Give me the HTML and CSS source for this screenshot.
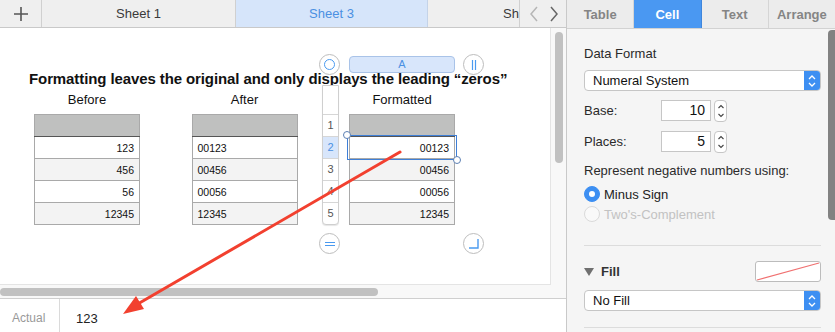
FILE: index.html
```html
<!DOCTYPE html>
<html>
<head>
  <meta charset="utf-8" />
  <title>Numbers - Numeral System</title>
  <link rel="stylesheet" href="styles.css">
</head>
<body>
  <div class="main">
    <!-- sheet tabs -->
    <div class="tabbar">
      <div class="tab-add">
        <svg width="16" height="16" viewBox="0 0 16 16"><path d="M8 1v14M1 8h14" stroke="#555" stroke-width="1.6" fill="none"/></svg>
      </div>
      <div class="sheet-tab">Sheet 1</div>
      <div class="sheet-tab active">Sheet 3</div>
      <div class="sheet-tab clipped"><span>Sh</span></div>
      <div class="tab-nav">
        <svg width="12" height="18" viewBox="0 0 12 18"><path d="M9 2L3 9l6 7" stroke="#b5b5b5" stroke-width="1.5" fill="none"/></svg>
        <svg width="12" height="18" viewBox="0 0 12 18"><path d="M3 2l6 7-6 7" stroke="#666" stroke-width="1.5" fill="none"/></svg>
      </div>
    </div>

    <!-- canvas -->
    <div class="canvas">
      <div class="sheet">
        <div class="title">Formatting leaves the original and only displays the leading “zeros”</div>
        <div class="groups">
          <div class="group">
            <div class="caption">Before</div>
            <table class="tbl right">
              <tr class="head"><td></td></tr>
              <tr><td>123</td></tr>
              <tr class="alt"><td>456</td></tr>
              <tr><td>56</td></tr>
              <tr class="alt"><td>12345</td></tr>
            </table>
          </div>
          <div class="group">
            <div class="caption">After</div>
            <table class="tbl">
              <tr class="head"><td></td></tr>
              <tr><td>00123</td></tr>
              <tr class="alt"><td>00456</td></tr>
              <tr><td>00056</td></tr>
              <tr class="alt"><td>12345</td></tr>
            </table>
          </div>
          <div class="group">
            <div class="caption">Formatted</div>
            <div class="fmt">
              <table class="tbl right">
                <tr class="head"><td></td></tr>
                <tr><td>00123</td></tr>
                <tr class="alt"><td>00456</td></tr>
                <tr><td>00056</td></tr>
                <tr class="alt"><td>12345</td></tr>
              </table>

              <!-- table handles -->
              <div class="rowhead">
                <div class="rh-top"></div>
                <div class="rh">1</div>
                <div class="rh sel">2</div>
                <div class="rh">3</div>
                <div class="rh">4</div>
                <div class="rh">5</div>
              </div>
              <div class="colbar">A</div>
              <div class="knob k-tl"><span class="ring"></span></div>
              <div class="knob k-tr">
                <svg width="8" height="12" viewBox="0 0 8 12"><path d="M2.5 1v10M5.5 1v10" stroke="#4a9af0" stroke-width="1.2"/></svg>
              </div>
              <div class="knob k-bl">
                <svg width="12" height="8" viewBox="0 0 12 8"><path d="M1 2.5h10M1 5.5h10" stroke="#4a9af0" stroke-width="1.2"/></svg>
              </div>
              <div class="knob k-br">
                <svg width="12" height="12" viewBox="0 0 12 12"><path d="M10 1v9H1" stroke="#4a9af0" stroke-width="1.4" fill="none"/></svg>
              </div>
              <div class="selection"></div>
              <div class="grip g1"></div>
              <div class="grip g2"></div>
            </div>
          </div>
        </div>
      </div>
      <div class="vgutter"><div class="vthumb"></div></div>
      <div class="hgutter"><div class="hthumb"></div></div>
      <div class="corner"></div>
    </div>

    <!-- formula bar -->
    <div class="bottombar">
      <div class="bb-label">Actual</div>
      <div class="bb-value">123</div>
    </div>
  </div>

  <!-- inspector -->
  <div class="inspector">
    <div class="insp-tabs">
      <div class="itab">Table</div>
      <div class="itab on">Cell</div>
      <div class="itab">Text</div>
      <div class="itab">Arrange</div>
    </div>
    <div class="insp-body">
      <div class="label">Data Format</div>
      <div class="popup">
        <span>Numeral System</span>
        <span class="popup-arrows">
          <svg width="10" height="14" viewBox="0 0 10 14"><path d="M2 5l3-3 3 3M2 9l3 3 3-3" stroke="#fff" stroke-width="1.3" fill="none"/></svg>
        </span>
      </div>
      <div class="field-row">
        <span class="field-label">Base:</span>
        <span class="numbox">10</span>
        <span class="stepper">
          <svg width="8" height="16" viewBox="0 0 8 16"><path d="M1.5 5l2.5-2.5 2.5 2.5M1.5 11l2.5 2.5 2.5-2.5" stroke="#444" stroke-width="1.1" fill="none"/></svg>
        </span>
      </div>
      <div class="field-row">
        <span class="field-label">Places:</span>
        <span class="numbox">5</span>
        <span class="stepper">
          <svg width="8" height="16" viewBox="0 0 8 16"><path d="M1.5 5l2.5-2.5 2.5 2.5M1.5 11l2.5 2.5 2.5-2.5" stroke="#444" stroke-width="1.1" fill="none"/></svg>
        </span>
      </div>
      <div class="label neg">Represent negative numbers using:</div>
      <div class="radio checked"><span class="dot"></span>Minus Sign</div>
      <div class="radio disabled"><span class="dot"></span>Two's-Complement</div>
      <div class="divider"></div>
      <div class="fill-row">
        <span class="disclosure"></span>
        <span class="fill-title">Fill</span>
        <span class="swatch">
          <svg width="64" height="19" viewBox="0 0 64 19"><path d="M1 18L63 1" stroke="#f07070" stroke-width="1.2"/></svg>
        </span>
      </div>
      <div class="popup">
        <span>No Fill</span>
        <span class="popup-arrows">
          <svg width="10" height="14" viewBox="0 0 10 14"><path d="M2 5l3-3 3 3M2 9l3 3 3-3" stroke="#fff" stroke-width="1.3" fill="none"/></svg>
        </span>
      </div>
      <div class="divider last"></div>
    </div>
    <div class="insp-scroll"></div>
  </div>

  <!-- annotation arrow -->
  <svg class="arrow" width="835" height="332" viewBox="0 0 835 332">
    <path d="M400 152L136 305" stroke="#f2402f" stroke-width="3" stroke-linecap="round"/>
    <path d="M123 314L144 309L136 296Z" fill="#f2402f"/>
  </svg>
</body>
</html>
```

FILE: styles.css
```css
* {
  margin: 0;
  padding: 0;
  box-sizing: border-box;
}

body {
  width: 835px;
  height: 332px;
  overflow: hidden;
  display: flex;
  font-family: "Liberation Sans", Arial, sans-serif;
  color: #222;
  background: #fff;
  position: relative;
}

/* ---------- left side ---------- */

.main {
  width: 566px;
  display: flex;
  flex-direction: column;
}

.tabbar {
  height: 28px;
  display: flex;
  background: #efefef;
  border-bottom: 1px solid #c9c9c9;
}

.tab-add {
  width: 42px;
  display: flex;
  align-items: center;
  justify-content: center;
  border-right: 1px solid #d0d0d0;
}

.sheet-tab {
  width: 194px;
  display: flex;
  align-items: center;
  justify-content: center;
  font-size: 13px;
  color: #3a3a3a;
  border-right: 1px solid #d0d0d0;
}

.sheet-tab.active {
  width: 192px;
  background: #d6e5fa;
  color: #4a90e2;
  border-right: 1px solid #c4d3e8;
}

.sheet-tab.clipped {
  width: 92px;
  justify-content: flex-start;
  white-space: nowrap;
  padding-left: 75px;
}

.tab-nav {
  flex: 1;
  display: flex;
  align-items: center;
  justify-content: space-around;
  padding: 0 2px 0 4px;
}

.canvas {
  height: 270px;
  display: grid;
  grid-template-columns: 551px 15px;
  grid-template-rows: 257px 13px;
  background: #f8f8f8;
}

.sheet {
  background: #fff;
  border-right: 1px solid #e4e4e4;
  border-bottom: 1px solid #e4e4e4;
  padding-top: 42px;
  overflow: hidden;
}

.title {
  font-size: 15px;
  letter-spacing: -0.1px;
  font-weight: bold;
  line-height: 18px;
  padding-left: 29px;
  color: #111;
  white-space: nowrap;
}

.groups {
  display: flex;
  gap: 51.5px;
  padding-left: 34px;
  margin-top: 4px;
}

.group {
  width: 106px;
}

.caption {
  font-size: 13px;
  line-height: 16px;
  text-align: center;
  color: #111;
  margin-bottom: 6px;
}

.tbl {
  width: 106px;
  border-collapse: collapse;
  font-size: 10.5px;
  color: #111;
}

.tbl td {
  height: 22px;
  border: 1px solid #a9a9a9;
  padding: 0 5px;
  background: #fff;
}

.tbl.right td {
  text-align: right;
}

.tbl .head td {
  background: #bfc0bf;
  border-bottom: 1px solid #555;
}

.tbl .alt td {
  background: #f3f3f3;
}

/* handles around the selected table */

.fmt {
  position: relative;
}

.rowhead {
  position: absolute;
  left: -27px;
  top: -29px;
  width: 17px;
  background: #fff;
  border: 1px solid #cfcfcf;
  border-radius: 0 0 4px 4px;
  box-shadow: 0 1px 1px rgba(0,0,0,0.1);
}

.rh-top {
  height: 28px;
}

.rh {
  height: 22px;
  border-top: 1px solid #d6d6d6;
  font-size: 11px;
  line-height: 21px;
  text-align: center;
  color: #555;
}

.rh.sel {
  background: #d8e6fb;
  color: #4a90e2;
}

.colbar {
  position: absolute;
  left: 0;
  top: -58px;
  width: 106px;
  height: 17px;
  background: #d8e6fb;
  border: 1px solid #a9c3e8;
  border-radius: 4px;
  font-size: 11px;
  line-height: 15px;
  text-align: center;
  color: #4a90e2;
}

.knob {
  position: absolute;
  width: 21px;
  height: 21px;
  border-radius: 50%;
  background: #fff;
  border: 1px solid #bdbdbd;
  display: flex;
  align-items: center;
  justify-content: center;
}

.k-tl { left: -30px; top: -60px; }
.k-tr { left: 114px; top: -60px; }
.k-bl { left: -30px; top: 119px; }
.k-br { left: 114px; top: 119px; }

.ring {
  width: 11px;
  height: 11px;
  border-radius: 50%;
  border: 1.5px solid #4a9af0;
}

.selection {
  position: absolute;
  left: -2px;
  top: 21px;
  width: 110px;
  height: 25px;
  border: 1px solid #3f7fd6;
}

.grip {
  position: absolute;
  width: 8px;
  height: 8px;
  border-radius: 50%;
  background: #fff;
  border: 1px solid #5c7fb3;
}

.g1 { left: -6px; top: 17px; }
.g2 { left: 104px; top: 42px; }

/* scrollbars */

.vgutter {
  padding: 4px 0 0 4px;
}

.vthumb {
  width: 8px;
  height: 131px;
  border-radius: 4px;
  background: #c1c1c1;
}

.hgutter {
  padding-top: 3px;
}

.hthumb {
  width: 378px;
  height: 8px;
  border-radius: 4px;
  background: #c1c1c1;
}

.bottombar {
  height: 34px;
  display: flex;
  border-top: 1px solid #cfcfcf;
  background: #fff;
}

.bb-label {
  width: 60px;
  border-right: 1px solid #dadada;
  padding: 12px 0 0 12px;
  font-size: 12px;
  color: #999;
}

.bb-value {
  padding: 12px 0 0 16px;
  font-size: 13px;
  color: #222;
}

/* ---------- inspector ---------- */

.inspector {
  width: 269px;
  position: relative;
  background: #f5f5f5;
  border-left: 1px solid #c9c9c9;
}

.insp-tabs {
  height: 29px;
  display: flex;
  background: #ececec;
  border-bottom: 1px solid #d2d2d2;
}

.itab {
  flex: 1;
  display: flex;
  align-items: center;
  justify-content: center;
  font-size: 13px;
  font-weight: bold;
  color: #858585;
  border-right: 1px solid #d5d5d5;
}

.itab:last-child {
  border-right: none;
}

.itab.on {
  background: #4a98f2;
  color: #fff;
  border-right-color: #3f86dc;
}

.insp-body {
  padding: 17px 14px 0 17px;
}

.label {
  font-size: 13px;
  line-height: 16px;
  color: #2a2a2a;
}

.popup {
  height: 21px;
  margin-top: 8px;
  display: flex;
  align-items: center;
  justify-content: space-between;
  background: #fff;
  border: 1px solid #c6c6c6;
  border-radius: 4px;
  font-size: 13px;
  padding-left: 8px;
  overflow: hidden;
  color: #111;
}

.popup-arrows {
  width: 16px;
  height: 100%;
  background: #3d8ff2;
  display: flex;
  align-items: center;
  justify-content: center;
}

.field-row {
  display: flex;
  align-items: center;
  height: 21px;
  margin-top: 9px;
  font-size: 13px;
}

.field-row + .field-row {
  margin-top: 10px;
}

.field-label {
  width: 77px;
  color: #2a2a2a;
}

.numbox {
  width: 50px;
  height: 21px;
  background: #fff;
  border: 1px solid #c6c6c6;
  font-size: 14px;
  line-height: 19px;
  text-align: right;
  padding-right: 5px;
  color: #111;
}

.stepper {
  width: 13px;
  height: 22px;
  margin-left: 3px;
  background: #fff;
  border: 1px solid #c6c6c6;
  border-radius: 4px;
  display: flex;
  align-items: center;
  justify-content: center;
}

.label.neg {
  margin-top: 11px;
}

.radio {
  display: flex;
  align-items: center;
  height: 18px;
  font-size: 13px;
  color: #222;
  margin-top: 2px;
}

.radio.checked {
  margin-top: 6px;
}

.dot {
  width: 16px;
  height: 16px;
  border-radius: 50%;
  margin-right: 4px;
  border: 1px solid #c8c8c8;
  background: #fff;
  position: relative;
}

.radio.checked .dot {
  background: #3d8ff2;
  border-color: #3d8ff2;
}

.radio.checked .dot::after {
  content: "";
  position: absolute;
  left: 4px;
  top: 4px;
  width: 6px;
  height: 6px;
  border-radius: 50%;
  background: #fff;
}

.radio.disabled {
  color: #c2c2c2;
}

.radio.disabled .dot {
  border-color: #dadada;
  background: #f9f9f9;
}

.divider {
  height: 1px;
  background: #dcdcdc;
  margin-top: 22px;
}

.divider.last {
  margin-top: 16px;
}

.fill-row {
  display: flex;
  align-items: center;
  height: 21px;
  margin-top: 15px;
}

.disclosure {
  width: 0;
  height: 0;
  border-left: 5px solid transparent;
  border-right: 5px solid transparent;
  border-top: 8px solid #707070;
  margin-right: 7px;
}

.fill-title {
  flex: 1;
  font-size: 13px;
  font-weight: bold;
  color: #333;
}

.swatch {
  width: 66px;
  height: 21px;
  background: #fff;
  border: 1px solid #bcbcbc;
  border-radius: 3px;
  display: flex;
  overflow: hidden;
}

.insp-scroll {
  position: absolute;
  right: 0;
  top: 30px;
  width: 7px;
  height: 190px;
  border-radius: 4px 0 0 4px;
  background: #828282;
}

.arrow {
  position: absolute;
  left: 0;
  top: 0;
  pointer-events: none;
}
```
